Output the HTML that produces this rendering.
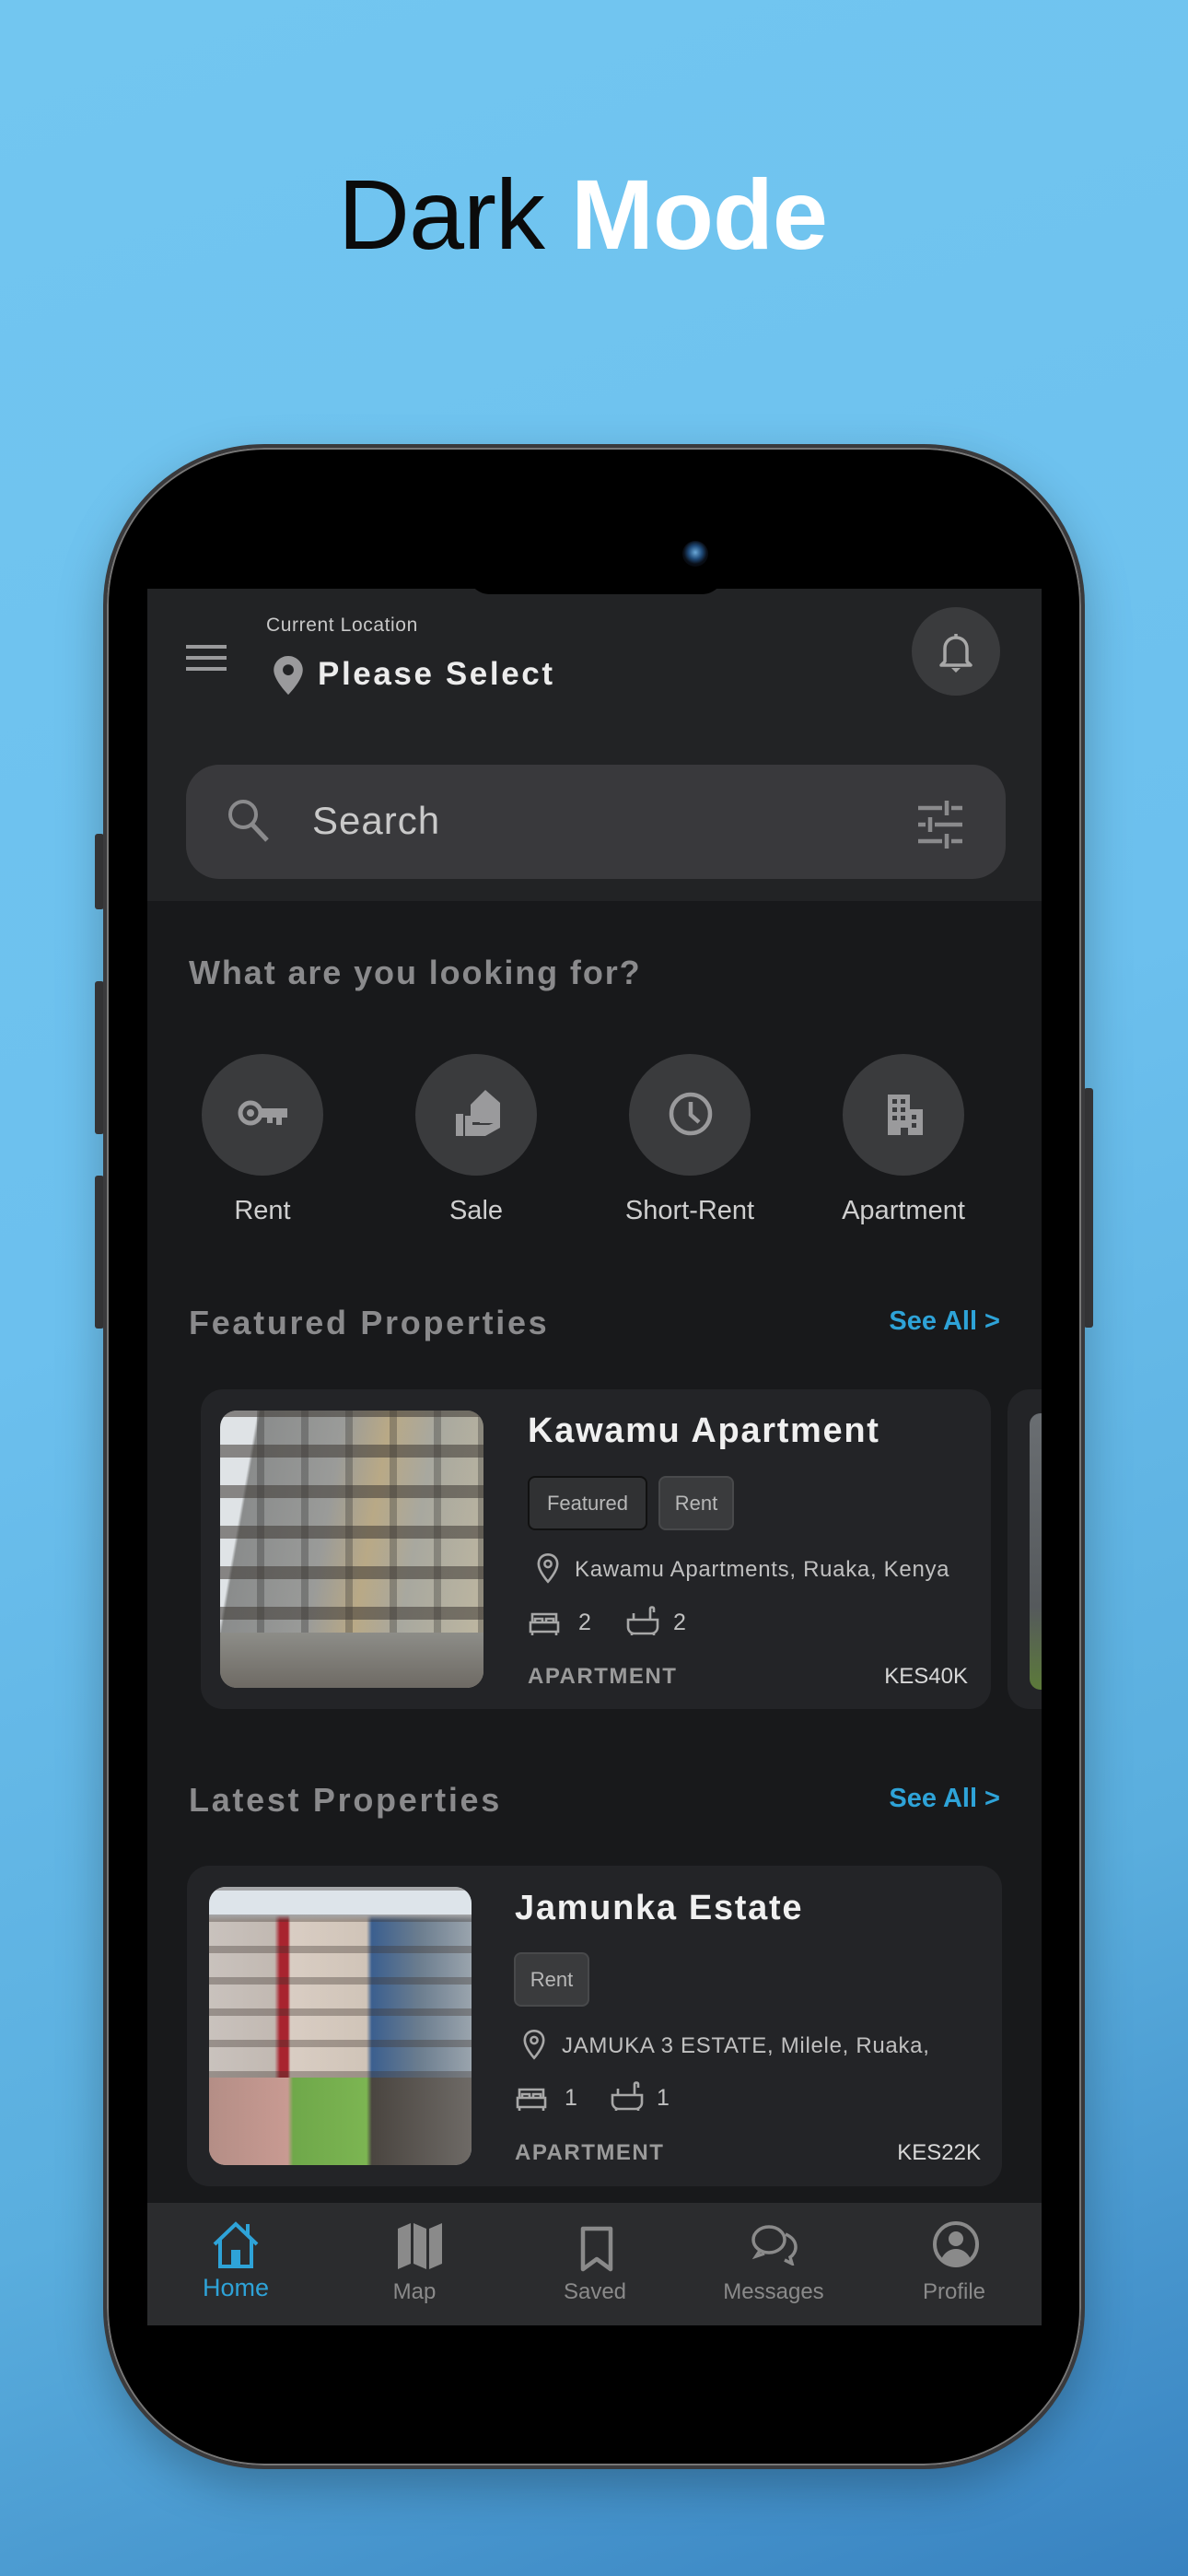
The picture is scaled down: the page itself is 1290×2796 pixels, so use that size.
<!DOCTYPE html>
<html><head><meta charset="utf-8">
<style>
*{margin:0;padding:0;box-sizing:border-box}
html,body{width:1290px;height:2796px;overflow:hidden}
body{position:relative;font-family:"Liberation Sans",sans-serif;background:linear-gradient(160deg,#72c6f0 0%,#6cc0ee 45%,#5aaede 75%,#3882c0 100%)}
.a{position:absolute}
.title{left:0;width:1265px;top:170px;text-align:center;font-size:108px;color:#0b0b0b;letter-spacing:-1px}
.title b{color:#fff;font-weight:bold}
.phone{left:112px;top:482px;width:1066px;height:2198px;border-radius:175px;background:#000;border:4px solid #3a3a3c;box-shadow:0 0 0 2px #777 inset,0 20px 50px rgba(0,0,0,.25)}
.btn{background:#3a3a3c;border-radius:3px}
.screen{left:160px;top:639px;width:971px;height:1885px;background:#18191b;overflow:hidden}
.hdr{left:0;top:0;width:971px;height:339px;background:#222325}
.t{position:absolute;white-space:nowrap}
.grey{color:#8a8a8c}
.sec{letter-spacing:2.3px}
.card{background:#232427;border-radius:24px}
.tag{position:absolute;height:59px;border-radius:8px;background:#3a3b3d;border:2px solid #48494b;color:#b8b8b8;font-size:22px;line-height:55px;text-align:center}
.nav{left:0;top:1752px;width:971px;height:133px;background:#2b2c2e}
.ni{position:absolute;width:160px;text-align:center;font-size:24px;color:#8a8a8a;top:83px}
</style></head><body>
<div class="a title">Dark <b>Mode</b></div>

<div class="a btn" style="left:103px;top:905px;width:10px;height:82px"></div>
<div class="a btn" style="left:103px;top:1065px;width:10px;height:166px"></div>
<div class="a btn" style="left:103px;top:1276px;width:10px;height:166px"></div>
<div class="a btn" style="left:1177px;top:1181px;width:10px;height:260px"></div>

<div class="a phone"></div>
<div class="a" style="left:507px;top:620px;width:280px;height:25px;background:#000;border-radius:0 0 30px 30px;z-index:3"></div>
<div class="a" style="left:741px;top:587px;width:28px;height:28px;border-radius:50%;background:radial-gradient(circle at 50% 45%,#6aa8d8 0,#1f4a78 35%,#0a0f18 60%,#000 100%);z-index:4"></div>

<div class="a screen">
  <div class="a hdr">
    <svg class="a" style="left:42px;top:60px" width="44" height="30"><g stroke="#9a9a9c" stroke-width="4"><line x1="0" y1="3" x2="44" y2="3"/><line x1="0" y1="15" x2="44" y2="15"/><line x1="0" y1="27" x2="44" y2="27"/></g></svg>
    <div class="t" style="left:129px;top:28px;font-size:21px;color:#c8c8c8;letter-spacing:.6px">Current Location</div>
    <svg class="a" style="left:137px;top:73px" width="32" height="42" viewBox="0 0 24 32"><path d="M12 0C5.4 0 0 5.2 0 11.6 0 20 12 32 12 32s12-12 12-20.4C24 5.2 18.6 0 12 0z" fill="#9a9a9c"/><circle cx="12" cy="11.5" r="4.5" fill="#222325"/></svg>
    <div class="t" style="left:185px;top:73px;font-size:35px;font-weight:bold;color:#ececec;letter-spacing:2.6px">Please Select</div>
    <div class="a" style="left:830px;top:20px;width:96px;height:96px;border-radius:50%;background:#3a3b3d"></div>
    <svg class="a" style="left:858px;top:46px" width="40" height="46" viewBox="0 0 40 46"><path d="M20 3v4M8 33V19c0-7 5-12 12-12s12 5 12 12v14l4 4H4z" fill="none" stroke="#a8a8a8" stroke-width="3.5" stroke-linejoin="round"/><path d="M15 40h10l-5 5z" fill="#a8a8a8"/></svg>
    <div class="a" style="left:42px;top:191px;width:890px;height:124px;border-radius:36px;background:#39393c"></div>
    <svg class="a" style="left:85px;top:226px" width="50" height="52" viewBox="0 0 50 52"><circle cx="19" cy="19" r="14" fill="none" stroke="#8a8a8c" stroke-width="4"/><line x1="29" y1="30" x2="45" y2="47" stroke="#8a8a8c" stroke-width="5"/></svg>
    <div class="t" style="left:179px;top:228px;font-size:42px;color:#c9c9c9;letter-spacing:1px">Search</div>
    <svg class="a" style="left:835px;top:228px" width="52" height="56" viewBox="0 0 52 56"><g stroke="#8a8a8c" stroke-width="4.5"><line x1="2" y1="10" x2="28" y2="10"/><line x1="38" y1="10" x2="50" y2="10"/><line x1="33" y1="2" x2="33" y2="18"/><line x1="2" y1="28" x2="10" y2="28"/><line x1="20" y1="28" x2="50" y2="28"/><line x1="15" y1="20" x2="15" y2="36"/><line x1="2" y1="46" x2="28" y2="46"/><line x1="38" y1="46" x2="50" y2="46"/><line x1="33" y1="38" x2="33" y2="54"/></g></svg>
  </div>

  <div class="t grey sec" style="left:45px;top:396px;font-size:36px;font-weight:bold;letter-spacing:1.9px">What are you looking for?</div>

  <div class="a" style="left:59px;top:505px;width:132px;height:132px;border-radius:50%;background:#3a3b3d"></div>
  <div class="a" style="left:291px;top:505px;width:132px;height:132px;border-radius:50%;background:#3a3b3d"></div>
  <div class="a" style="left:523px;top:505px;width:132px;height:132px;border-radius:50%;background:#3a3b3d"></div>
  <div class="a" style="left:755px;top:505px;width:132px;height:132px;border-radius:50%;background:#3a3b3d"></div>
  <svg class="a" style="left:98px;top:553px" width="56" height="36" viewBox="0 0 56 36"><circle cx="14" cy="16" r="11" fill="none" stroke="#9a9a9c" stroke-width="5"/><circle cx="14" cy="16" r="4" fill="#9a9a9c"/><path d="M25 11h29v10h-6v8h-6v-8h-4v6h-6v-6h-7z" fill="#9a9a9c"/></svg>
  <svg class="a" style="left:333px;top:540px" width="52" height="56" viewBox="0 0 52 56"><path d="M18 20L34 4l16 14v22H28c0-5-6-7-10-7z" fill="#9a9a9c"/><rect x="2" y="30" width="8" height="24" fill="#9a9a9c"/><path d="M12 32h10c6 0 10 3 10 7H20v3h18l12-5v8l-16 9H12z" fill="#9a9a9c"/></svg>
  <svg class="a" style="left:565px;top:545px" width="50" height="50"><circle cx="25" cy="25" r="21" fill="none" stroke="#9a9a9c" stroke-width="4.5"/><path d="M25 12v14l9 8" fill="none" stroke="#9a9a9c" stroke-width="4.5"/></svg>
  <svg class="a" style="left:800px;top:545px" width="44" height="48" viewBox="0 0 44 48"><path d="M4 48V4h24v16h14v28H26v-8h-8v8z" fill="#9a9a9c"/><g fill="#3a3b3d"><rect x="9" y="9" width="5" height="5"/><rect x="18" y="9" width="5" height="5"/><rect x="9" y="18" width="5" height="5"/><rect x="18" y="18" width="5" height="5"/><rect x="9" y="27" width="5" height="5"/><rect x="18" y="27" width="5" height="5"/><rect x="30" y="26" width="5" height="5"/><rect x="30" y="35" width="5" height="5"/></g></svg>
  <div class="t" style="left:25px;width:200px;text-align:center;top:659px;font-size:29px;color:#cfcfcf">Rent</div>
  <div class="t" style="left:257px;width:200px;text-align:center;top:659px;font-size:29px;color:#cfcfcf">Sale</div>
  <div class="t" style="left:489px;width:200px;text-align:center;top:659px;font-size:29px;color:#cfcfcf">Short-Rent</div>
  <div class="t" style="left:721px;width:200px;text-align:center;top:659px;font-size:29px;color:#cfcfcf">Apartment</div>

  <div class="t grey" style="left:45px;top:776px;font-size:36px;font-weight:bold;letter-spacing:2.7px">Featured Properties</div>
  <div class="t" style="right:45px;top:779px;font-size:29px;font-weight:bold;color:#2ea3d8">See All &gt;</div>

  <div class="a card" style="left:58px;top:869px;width:858px;height:347px"></div>
  <div class="a card" style="left:934px;top:869px;width:100px;height:347px"></div>
  <div class="a" style="left:958px;top:895px;width:20px;height:300px;border-radius:12px 0 0 12px;background:linear-gradient(#6a6e72,#55595c 70%,#5c7a3a)"></div>
  <div class="a" style="left:79px;top:892px;width:286px;height:301px;border-radius:18px;overflow:hidden;background:linear-gradient(100deg,#dfe3e6 0,#dfe3e6 12%,#8a8c8c 13%,#9a9b99 40%,#b9a986 55%,#a8a89f 70%,#c0b8a0 100%)">
    <div class="a" style="inset:0;background:repeating-linear-gradient(0deg,transparent 0 30px,rgba(60,55,50,.55) 30px 44px),repeating-linear-gradient(90deg,transparent 0 40px,rgba(40,40,40,.3) 40px 48px)"></div>
    <div class="a" style="left:0;bottom:0;width:100%;height:60px;background:linear-gradient(#8d8d88,#6e6a64)"></div>
  </div>
  <div class="t" style="left:413px;top:893px;font-size:38px;font-weight:bold;color:#f0f0f0;letter-spacing:1.7px">Kawamu Apartment</div>
  <div class="tag" style="left:413px;top:963px;width:130px;background:#303133;border-color:#111">Featured</div>
  <div class="tag" style="left:555px;top:963px;width:82px">Rent</div>
  <svg class="a" style="left:421px;top:1046px" width="28" height="34" viewBox="0 0 24 30"><path d="M12 2C6.5 2 3 6 3 11c0 7 9 17 9 17s9-10 9-17c0-5-3.5-9-9-9z" fill="none" stroke="#a8a8a8" stroke-width="2.3"/><circle cx="12" cy="11" r="3.2" fill="none" stroke="#a8a8a8" stroke-width="2.2"/></svg>
  <div class="t" style="left:464px;top:1051px;font-size:24px;color:#c0c0c0;letter-spacing:.7px">Kawamu Apartments, Ruaka, Kenya</div>
  <svg class="a" style="left:414px;top:1110px" width="34" height="28" viewBox="0 0 34 28"><path d="M4 12V3h26v9M2 12h30v10H2zM4 22v4M30 22v4M7 12V8h8v4M19 12V8h8v4" fill="none" stroke="#a8a8a8" stroke-width="2.6"/></svg>
  <div class="t" style="left:468px;top:1108px;font-size:25px;color:#c0c0c0">2</div>
  <svg class="a" style="left:520px;top:1103px" width="36" height="34" viewBox="0 0 36 34"><path d="M2 16h32v8c0 4-3 7-7 7H9c-4 0-7-3-7-7zM8 16V9M26 16V4c0-2 4-2 4 0v4M6 31v2M30 31v2" fill="none" stroke="#a8a8a8" stroke-width="2.6"/></svg>
  <div class="t" style="left:571px;top:1108px;font-size:25px;color:#c0c0c0">2</div>
  <div class="t" style="left:413px;top:1167px;font-size:24px;font-weight:bold;color:#9a9a9a;letter-spacing:1.5px">APARTMENT</div>
  <div class="t" style="right:80px;top:1167px;font-size:24px;color:#d8d8d8">KES40K</div>

  <div class="t grey" style="left:45px;top:1294px;font-size:36px;font-weight:bold;letter-spacing:2.7px">Latest Properties</div>
  <div class="t" style="right:45px;top:1297px;font-size:29px;font-weight:bold;color:#2ea3d8">See All &gt;</div>

  <div class="a card" style="left:43px;top:1386px;width:885px;height:348px"></div>
  <div class="a" style="left:67px;top:1409px;width:285px;height:302px;border-radius:18px;overflow:hidden;background:linear-gradient(90deg,#c9c2bd 0,#c2b9b2 25%,#a8242f 27%,#a8242f 30%,#d9cdc3 31%,#d0c4b8 60%,#3b5f8f 62%,#6b7d8f 80%,#9aa4ad 100%)">
    <div class="a" style="inset:0;background:linear-gradient(#dde4ea 0,#dde4ea 10%,transparent 12%)"></div>
    <div class="a" style="inset:0;background:repeating-linear-gradient(0deg,transparent 0 26px,rgba(60,50,45,.35) 26px 34px)"></div>
    <div class="a" style="left:0;bottom:0;width:100%;height:95px;background:linear-gradient(90deg,#b48e86 0,#c89a92 30%,#6fa84a 32%,#7cb552 60%,#4a4540 62%,#6e6a66 100%)"></div>
  </div>
  <div class="t" style="left:399px;top:1411px;font-size:38px;font-weight:bold;color:#f0f0f0;letter-spacing:1.7px">Jamunka Estate</div>
  <div class="tag" style="left:398px;top:1480px;width:82px">Rent</div>
  <svg class="a" style="left:406px;top:1563px" width="28" height="34" viewBox="0 0 24 30"><path d="M12 2C6.5 2 3 6 3 11c0 7 9 17 9 17s9-10 9-17c0-5-3.5-9-9-9z" fill="none" stroke="#a8a8a8" stroke-width="2.3"/><circle cx="12" cy="11" r="3.2" fill="none" stroke="#a8a8a8" stroke-width="2.2"/></svg>
  <div class="t" style="left:450px;top:1568px;font-size:24px;color:#c0c0c0;letter-spacing:.7px">JAMUKA 3 ESTATE, Milele, Ruaka,</div>
  <svg class="a" style="left:400px;top:1626px" width="34" height="28" viewBox="0 0 34 28"><path d="M4 12V3h26v9M2 12h30v10H2zM4 22v4M30 22v4M7 12V8h8v4M19 12V8h8v4" fill="none" stroke="#a8a8a8" stroke-width="2.6"/></svg>
  <div class="t" style="left:453px;top:1624px;font-size:25px;color:#c0c0c0">1</div>
  <svg class="a" style="left:503px;top:1619px" width="36" height="34" viewBox="0 0 36 34"><path d="M2 16h32v8c0 4-3 7-7 7H9c-4 0-7-3-7-7zM8 16V9M26 16V4c0-2 4-2 4 0v4M6 31v2M30 31v2" fill="none" stroke="#a8a8a8" stroke-width="2.6"/></svg>
  <div class="t" style="left:553px;top:1624px;font-size:25px;color:#c0c0c0">1</div>
  <div class="t" style="left:399px;top:1684px;font-size:24px;font-weight:bold;color:#9a9a9a;letter-spacing:1.5px">APARTMENT</div>
  <div class="t" style="right:66px;top:1684px;font-size:24px;color:#d8d8d8">KES22K</div>

  <div class="a nav">
    <svg class="a" style="left:69px;top:19px" width="54" height="54" viewBox="0 0 54 54"><path d="M4 26L27 4l23 22M10 20v30h34V20M40 16V4" fill="none" stroke="#2ea3d8" stroke-width="4"/><rect x="22" y="32" width="10" height="18" fill="#2ea3d8"/></svg>
    <div class="ni" style="left:16px;top:77px;color:#2ea3d8;font-size:27px">Home</div>
    <svg class="a" style="left:270px;top:22px" width="52" height="50" viewBox="0 0 52 50"><path d="M2 6l14-6v44L2 50zM19 0l14 6v44l-14-6zM36 6l14-6v44l-14 6z" fill="#8a8a8a"/></svg>
    <div class="ni" style="left:210px">Map</div>
    <svg class="a" style="left:470px;top:25px" width="36" height="50" viewBox="0 0 36 50"><path d="M3 3h30v44L18 36 3 47z" fill="none" stroke="#8a8a8a" stroke-width="4.5" stroke-linejoin="round"/></svg>
    <div class="ni" style="left:406px">Saved</div>
    <svg class="a" style="left:655px;top:22px" width="52" height="46" viewBox="0 0 52 46"><ellipse cx="20" cy="18" rx="17" ry="14" fill="none" stroke="#8a8a8a" stroke-width="3.5"/><path d="M38 12c7 3 11 8 11 14 0 5-3 9-6 11l2 7-8-4M10 30l-4 6 9-3" fill="none" stroke="#8a8a8a" stroke-width="3.5"/></svg>
    <div class="ni" style="left:600px">Messages</div>
    <svg class="a" style="left:852px;top:19px" width="52" height="52" viewBox="0 0 52 52"><circle cx="26" cy="26" r="23" fill="none" stroke="#8a8a8a" stroke-width="4"/><circle cx="26" cy="20" r="8" fill="#8a8a8a"/><path d="M10 42c4-8 10-11 16-11s12 3 16 11c-4 5-10 8-16 8s-12-3-16-8z" fill="#8a8a8a"/></svg>
    <div class="ni" style="left:796px">Profile</div>
  </div>
</div>
</body></html>
